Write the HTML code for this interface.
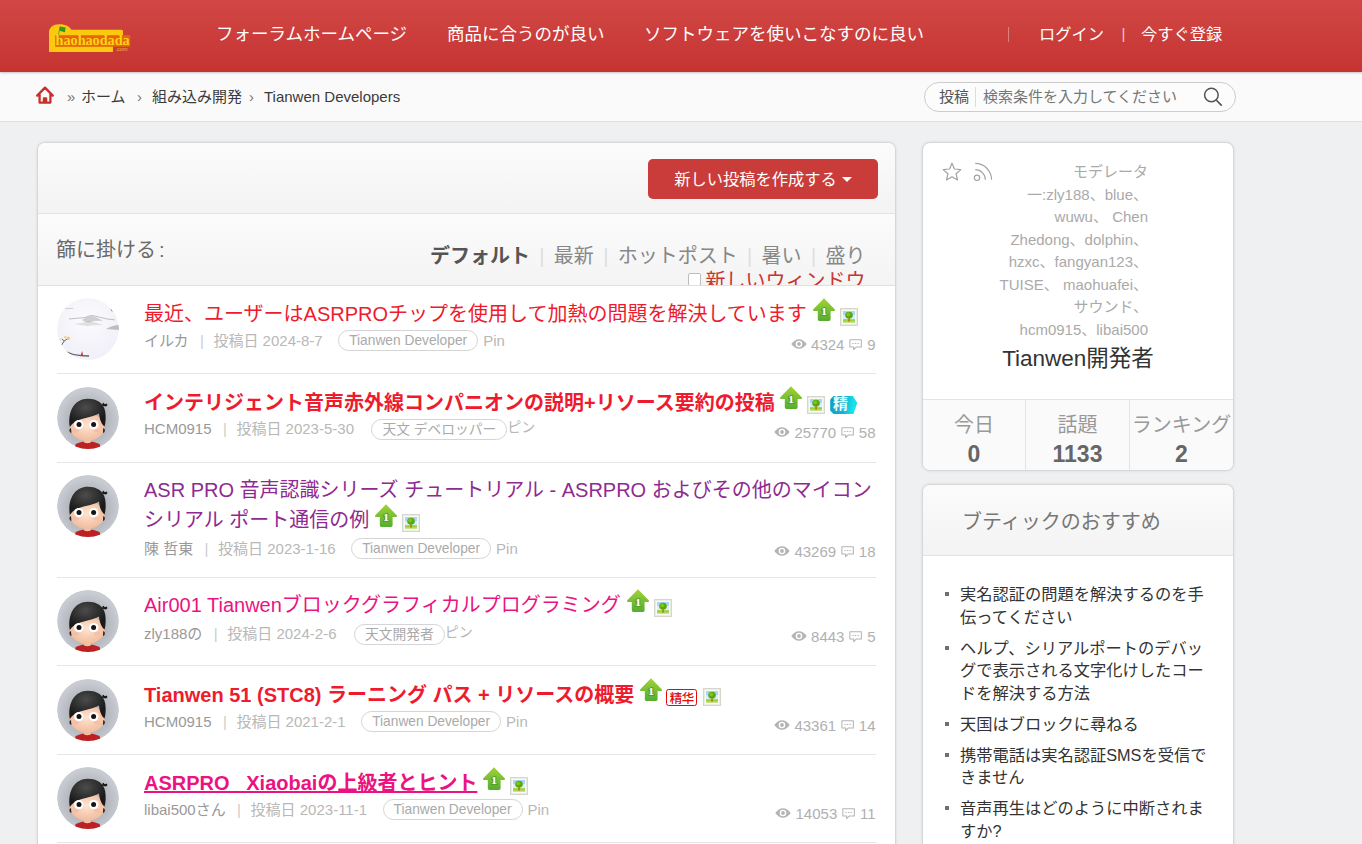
<!DOCTYPE html>
<html lang="ja">
<head>
<meta charset="utf-8">
<title>Tianwen Developers</title>
<style>
*{box-sizing:border-box;margin:0;padding:0}
html,body{width:1362px;height:844px;overflow:hidden}
body{background:#eff0f2;font-family:"Liberation Sans","Noto Sans CJK JP",sans-serif;color:#333;position:relative}
a{color:inherit;text-decoration:none}
.abs{position:absolute;white-space:nowrap}
#hd{position:absolute;left:0;top:0;width:1362px;height:72px;background:linear-gradient(#d14745,#c53431);box-shadow:0 1px 2px rgba(0,0,0,.22);z-index:2}
#hd .nav{position:absolute;top:0;height:68px;line-height:68px;font-size:17.5px;color:#fff;white-space:nowrap}
#hd .bar{position:absolute;top:27px;width:1px;height:15px;background:rgba(255,255,255,.35)}
#crumb{position:absolute;left:0;top:72px;width:1362px;height:50px;background:#fafafa;border-bottom:1px solid #dddee0}
#crumb .t{position:absolute;top:0;height:49px;line-height:49px;font-size:15px;color:#3a3a3a;white-space:nowrap}
#crumb .s{color:#777}
#search{position:absolute;left:924px;top:10px;width:312px;height:30px;border:1px solid #ccc;border-radius:15px;background:#fcfcfc}
#search .k{position:absolute;left:14px;top:0;line-height:28px;font-size:15px;color:#555}
#search .v{position:absolute;left:50px;top:4px;width:1px;height:20px;background:#ddd}
#search .p{position:absolute;left:58px;top:0;line-height:28px;font-size:15px;color:#757575}
#main{position:absolute;left:37px;top:142px;width:859px;height:720px;background:#fff;border:1px solid #d6d7d9;border-radius:8px;overflow:hidden;box-shadow:0 0 3px rgba(0,0,0,.1)}
#tb1{position:absolute;left:0;top:0;width:100%;height:71px;background:linear-gradient(#fbfbfb,#f3f3f3);border-bottom:1px solid #e3e3e3}
#tb2{position:absolute;left:0;top:71px;width:100%;height:72px;background:linear-gradient(#fbfbfb,#f4f4f4);border-bottom:1px solid #e0e0e0;overflow:hidden}
#newbtn{position:absolute;left:610px;top:16px;width:230px;height:40px;background:#c93c39;border-radius:5px;color:#fff;font-size:16.25px;line-height:40px;text-align:center;white-space:nowrap}
#newbtn i{display:inline-block;width:0;height:0;border:5px solid transparent;border-top:5px solid #fff;border-bottom:0;vertical-align:middle;margin-left:5px;position:relative;top:-1px}
.ftabs{left:300px;top:30px;width:538px;height:60px;white-space:normal;text-align:right;font-size:20px;line-height:25px;color:#888;padding-right:10.5px}
.ftabs i{font-style:normal;color:#ddd;margin:0 9.35px;font-size:20px}
.cb{display:inline-block;width:12.5px;height:12.5px;border:1px solid #bdbdbd;border-radius:2px;background:#fff;margin-right:5px;vertical-align:2.5px}
.row{position:absolute;left:0;top:0;width:857px}
.row .sep{position:absolute;left:19px;width:819px;height:1px;background:#e6e6e6}
.av{position:absolute;left:19px;width:62px;height:62px;border-radius:50%;overflow:hidden}
.av svg{display:block}
.tt{position:absolute;left:106px;font-size:20px;line-height:30px;width:745px}
.tt b{font-weight:700}
.meta{position:absolute;left:106px;font-size:15px;line-height:22px;color:#b8b8b8;white-space:nowrap}
.meta .u{color:#999}
.meta .bar{color:#ccc;margin:0 9.6px 0 11.4px}
.pill{display:inline-block;border:1px solid #d5d5d5;border-radius:11px;height:21px;line-height:19px;font-size:13.75px;padding:0 10px;color:#aaa;margin-left:15.5px;vertical-align:1px}
.pin{color:#b8b8b8;margin-left:5px}
.pinj{color:#b8b8b8;margin-left:0;font-size:14px;position:relative;top:-2px;line-height:1}
.st{position:absolute;right:19.5px;margin-top:-.5px;font-size:15px;line-height:20px;height:20px;color:#b0b0b0;white-space:nowrap;display:flex;align-items:center}
.st svg{display:block}
.ic{display:inline-block;vertical-align:baseline}
.card{position:absolute;left:922px;width:312px;background:#fff;border:1px solid #d6d7d9;border-radius:8px;overflow:hidden;box-shadow:0 0 3px rgba(0,0,0,.1)}
.stat{top:266px;text-align:center;font-size:20px;line-height:30px;color:#999;white-space:nowrap}
.stat b{display:block;font-size:23px;line-height:28px;color:#666}
.rec{position:absolute;left:22px;top:98px;width:266px;list-style:none;font-size:16.25px;line-height:22.5px;color:#333}
.rec li{position:relative;padding-left:15px;margin-bottom:8.5px;word-break:break-all}
.rec li:before{content:"";position:absolute;left:0;top:9px;width:4px;height:4px;background:#707070}
</style>
</head>
<body>
<div id="hd">
<svg class="abs" style="left:46px;top:20px" width="90" height="36" viewBox="0 0 90 36">
<path d="M3 32V12.5C3 7.5 7 4.2 13.5 4.2C20 4.2 23.5 6.6 25.5 9.8H75.5Q77 9.8 77 11.3V20H67V32Z" fill="#fdc90f"/>
<rect x="9.2" y="15.2" width="75" height="11.6" fill="#e8670c"/>
<path d="M12.2 16.5L14 6.6" stroke="#6aa21a" stroke-width="0.9" fill="none"/>
<path d="M14 6.4L19.6 7.6L19 12.2L13.3 10.8Z" fill="#2f9a1e"/>
<text x="9.6" y="25.3" font-family="'Liberation Serif',serif" font-weight="700" font-size="14.2" fill="#fdd314" textLength="74" lengthAdjust="spacingAndGlyphs">haohaodada</text>
<text x="69.5" y="30.6" font-family="'Liberation Sans',sans-serif" font-size="4.6" fill="#f6b93a" textLength="12" lengthAdjust="spacingAndGlyphs">.com</text>
</svg>
<a class="nav" style="left:216px">フォーラムホームページ</a>
<a class="nav" style="left:447px">商品に合うのが良い</a>
<a class="nav" style="left:644px">ソフトウェアを使いこなすのに良い</a>
<span class="bar" style="left:1008px"></span>
<a class="nav" style="left:1039px;font-size:16.25px">ログイン</a>
<span class="nav" style="left:1121.5px;font-size:15px;color:rgba(255,255,255,.75)">|</span>
<a class="nav" style="left:1141px;font-size:16.25px">今すぐ登録</a>
</div>
<div id="crumb">
<svg class="abs" style="left:35px;top:13px" width="20" height="20" viewBox="0 0 20 20"><path d="M2.2 10.6L10 2.6L17.8 10.6M4.6 9.4V17.6H15.4V9.4M8.9 17.6V13.4H11.1V17.6" fill="none" stroke="#c5302d" stroke-width="2.3" stroke-linejoin="round" stroke-linecap="round"/></svg>
<span class="t s" style="left:67px">»</span>
<a class="t" style="left:81px">ホーム</a>
<span class="t s" style="left:137px">›</span>
<a class="t" style="left:152px">組み込み開発</a>
<span class="t s" style="left:249px">›</span>
<a class="t" style="left:264px">Tianwen Developers</a>
<div id="search"><span class="k">投稿</span><span class="v"></span><span class="p">検索条件を入力してください</span>
<svg class="abs" style="left:275.5px;top:2px" width="24" height="24" viewBox="0 0 24 24"><circle cx="10.4" cy="10" r="6.8" fill="none" stroke="#555" stroke-width="1.5"/><path d="M15.2 15L20.2 20.2" stroke="#555" stroke-width="1.7" stroke-linecap="round"/></svg>
</div>
</div>
<div id="main">
<div id="tb1"><a id="newbtn">新しい投稿を作成する<i></i></a></div>
<div id="tb2">
<span class="abs" style="left:18px;top:23px;font-size:20px;line-height:26px;color:#6a6a6a">篩に掛ける<span style="margin-left:3px">:</span></span>
<div class="abs ftabs"><b style="color:#555">デフォルト</b><i>|</i>最新<i>|</i>ホットポスト<i>|</i>暑い<i>|</i>盛り<br><span class="cb"></span><span style="color:#c9342f">新しいウィンドウ</span></div>
</div>
<div class="row">
<div class="av" style="top:155px"><svg width="62" height="62" viewBox="0 0 62 62"><defs><filter id="bl" x="-20%" y="-50%" width="140%" height="200%"><feGaussianBlur stdDeviation=".7"/></filter><radialGradient id="gsky" cx="50%" cy="35%" r="65%"><stop offset="0" stop-color="#fbfbfd"/><stop offset="1" stop-color="#f1eff8"/></radialGradient></defs><circle cx="31" cy="31" r="31" fill="url(#gsky)"/>
<g filter="url(#bl)"><path d="M12 21Q22 20 28 19.6Q33 17 36 17.6Q42 19 50 21Q56 21.4 58 22" fill="none" stroke="#8f8f8f" stroke-width="1" opacity=".55"/>
<path d="M25 22Q31 18 35 18Q40 19 46 23Q38 22.4 34 24Q29 25.4 25 22Z" fill="#8a8a8a" opacity=".38"/>
<path d="M17 26Q26 25 31 23Q38 24 46 27Q38 26.6 30 28Z" fill="#9a9a9a" opacity=".28"/>
<path d="M49 31Q56 27 62 27V32Q55 31.4 49 31Z" fill="#7c7c7c" opacity=".45"/>
<path d="M8 10.5H16" stroke="#aaa" stroke-width=".8" opacity=".6"/></g>
<path d="M4.6 47L7.2 43L5 40.8M7.2 43L11.6 40" stroke="#555" stroke-width=".9" fill="none"/>
<circle cx="11.2" cy="40.3" r="1.7" fill="#f1c77d"/><circle cx="8.2" cy="39" r="1.2" fill="#f3d39a"/><circle cx="3.4" cy="41.5" r="1" fill="#f3d39a"/>
<path d="M9.5 54Q16 57.2 24 57.6L32 58" stroke="#3c3c3c" stroke-width="1.3" fill="none" opacity=".8"/>
<path d="M23.6 57.4L25.2 53L26 57.6Z" fill="#d42a2a"/>
<path d="M54 11.5L55.2 13.4" stroke="#e05a4a" stroke-width="1"/>
</svg></div>
<div class="tt" style="top:156px"><a style="color:#ee1b2e">最近、ユーザーはASRPROチップを使用して加熱の問題を解決しています</a><svg class="ic" width="22" height="23" viewBox="0 0 22 23" style="margin-left:6px;margin-top:-4px;vertical-align:0"><defs><linearGradient id="gup" x1="0" y1="0" x2="0" y2="1"><stop offset="0" stop-color="#a2d236"/><stop offset="1" stop-color="#55ad31"/></linearGradient></defs><path d="M11 .2L21.9 11.6Q22.4 12.9 21 12.9H17.6V21.2Q17.6 22.9 16 22.9H6.4Q4.8 22.9 4.8 21.2V12.9H1Q-.4 12.9 .1 11.6Z" fill="url(#gup)"/><text x="11.1" y="17.3" font-family="'Liberation Serif',serif" font-weight="700" font-size="10.5" fill="#fff" stroke="#4c9a22" stroke-width="1.5" paint-order="stroke" text-anchor="middle" transform="translate(-2.8,0) scale(1.25,1)">1</text></svg><svg class="ic" width="18" height="18" viewBox="0 0 18 18" style="margin-left:5px;vertical-align:-5px"><rect x=".5" y=".5" width="17" height="17" fill="#fff" stroke="#d6d6ce"/><rect x="1.5" y="1.5" width="15" height="15" fill="#fafaf6" stroke="#ecece6"/><rect x="3" y="3" width="12" height="8.4" fill="#a9d6f7"/><rect x="3" y="7" width="12" height="4.4" fill="#d9eefb"/><rect x="3" y="11.2" width="12" height="3.8" fill="#9bd23c"/><rect x="3" y="13.6" width="12" height="1.4" fill="#c6e58a"/><rect x="8.2" y="9" width="1.7" height="4.6" fill="#d5720f"/><ellipse cx="9" cy="7.2" rx="3.8" ry="3.4" fill="#58aa0c"/><ellipse cx="8.2" cy="6.4" rx="2" ry="1.8" fill="#80c41a"/></svg></div>
<div class="meta" style="top:187px"><span class="u">イルカ</span><span class="bar">|</span>投稿日 2024-8-7<span class="pill">Tianwen Developer</span><span class="pin">Pin</span></div>
<div class="st" style="top:192.5px"><svg width="16" height="10" viewBox="0 0 16 10" style="margin-right:4.2px;margin-top:-1.5px"><path d="M.3 5Q3.6 .2 8 .2Q12.4 .2 15.7 5Q12.4 9.8 8 9.8Q3.6 9.8 .3 5Z" fill="#b4b4b4"/><circle cx="8" cy="5" r="3.3" fill="#fff"/><circle cx="8" cy="5" r="1.9" fill="#b4b4b4"/></svg><span>4324</span><svg width="13.2" height="11.3" viewBox="0 0 14 12" style="margin:-.3px 4.5px 0 5px"><path d="M.9 .7H13.1V8.6H7.6L5 11.3V8.6H.9Z" fill="none" stroke="#b4b4b4" stroke-width="1.1" stroke-linejoin="round"/><path d="M3.6 4.7H5M6.3 4.7H7.7M9 4.7H10.4" stroke="#b4b4b4" stroke-width="1.1"/></svg><span>9</span></div>
<div class="sep" style="top:230px"></div>
</div>
<div class="row">
<div class="av" style="top:244px"><svg width="62" height="62" viewBox="0 0 62 62"><defs><radialGradient id="gbg" cx="50%" cy="55%" r="50%"><stop offset="0.5" stop-color="#aeb2b8"/><stop offset="1" stop-color="#c8cbd1"/></radialGradient><radialGradient id="ghair" cx="45%" cy="30%" r="60%"><stop offset="0" stop-color="#4c4c4c"/><stop offset="1" stop-color="#1a1a1a"/></radialGradient><radialGradient id="gface" cx="50%" cy="45%" r="60%"><stop offset="0" stop-color="#ffe4d0"/><stop offset="1" stop-color="#f0b898"/></radialGradient></defs><g>
<circle cx="31" cy="31" r="31" fill="url(#gbg)"/>
<path d="M18.6 57Q24 54.2 30.5 54.2Q37 54.2 42.6 57L44 63H17.5Z" fill="#bd2023"/>
<rect x="27.2" y="49" width="6.6" height="5.6" rx="2.4" fill="#f3bfa2"/>
<ellipse cx="30.2" cy="40" rx="17.4" ry="13.8" fill="url(#gface)"/>
<ellipse cx="19" cy="43.4" rx="3" ry="1.8" fill="#f7a9a0" opacity=".4"/><ellipse cx="39.6" cy="43.4" rx="3" ry="1.8" fill="#f7a9a0" opacity=".4"/>
<path d="M12.8 40C10.3 24 18 11.8 30.6 11.8C40.5 11.8 46.8 16.5 48.2 24.5C49 30 48.8 35 47.6 39.4C45.2 38 42.4 33 42 26.5C34 31.5 21 30.5 14.8 37.6Z" fill="url(#ghair)"/>
<path d="M12.6 42Q12 45.5 14.4 46L14 41Z" fill="#222"/><path d="M47.6 42Q48.4 45.5 46 46L46.2 41Z" fill="#222"/>
<path d="M45 18.5Q45.5 14.5 47.2 16.4Q47 17.8 49.6 16.4Q51.6 18.6 48.4 19.6Z" fill="#1c1c1c"/>
<ellipse cx="30.4" cy="54.6" rx="3.7" ry="1.7" fill="#f3bfa2"/>
<circle cx="21.8" cy="37.6" r="4.7" fill="#fff"/><circle cx="36.8" cy="37.6" r="4.7" fill="#fff"/>
<circle cx="22" cy="37.6" r="2.5" fill="#151515"/><circle cx="36.6" cy="37.6" r="2.5" fill="#151515"/>
</g></svg></div>
<div class="tt" style="top:245px"><a style="color:#ee1b2e"><b>インテリジェント音声赤外線コンパニオンの説明+リソース要約の投稿</b></a><span style="position:relative;top:-1px;left:-.5px"><svg class="ic" width="22" height="23" viewBox="0 0 22 23" style="margin-left:6px;margin-top:-4px;vertical-align:0"><path d="M11 .2L21.9 11.6Q22.4 12.9 21 12.9H17.6V21.2Q17.6 22.9 16 22.9H6.4Q4.8 22.9 4.8 21.2V12.9H1Q-.4 12.9 .1 11.6Z" fill="url(#gup)"/><text x="11.1" y="17.3" font-family="'Liberation Serif',serif" font-weight="700" font-size="10.5" fill="#fff" stroke="#4c9a22" stroke-width="1.5" paint-order="stroke" text-anchor="middle" transform="translate(-2.8,0) scale(1.25,1)">1</text></svg><svg class="ic" width="18" height="18" viewBox="0 0 18 18" style="margin-left:5px;vertical-align:-5px"><rect x=".5" y=".5" width="17" height="17" fill="#fff" stroke="#d6d6ce"/><rect x="1.5" y="1.5" width="15" height="15" fill="#fafaf6" stroke="#ecece6"/><rect x="3" y="3" width="12" height="8.4" fill="#a9d6f7"/><rect x="3" y="7" width="12" height="4.4" fill="#d9eefb"/><rect x="3" y="11.2" width="12" height="3.8" fill="#9bd23c"/><rect x="3" y="13.6" width="12" height="1.4" fill="#c6e58a"/><rect x="8.2" y="9" width="1.7" height="4.6" fill="#d5720f"/><ellipse cx="9" cy="7.2" rx="3.8" ry="3.4" fill="#58aa0c"/><ellipse cx="8.2" cy="6.4" rx="2" ry="1.8" fill="#80c41a"/></svg><span class="ic" style="position:relative;width:27px;height:18px;margin-left:5px;vertical-align:-5px;background:linear-gradient(100deg,#0b9fc4 0%,#12b6d4 55%,#19e6ee 85%,#10c4dc 100%);clip-path:polygon(12% 0,84% 0,100% 38%,86% 100%,12% 100%,0 80%,0 20%);border-radius:4px"><span style="position:absolute;left:2.8px;top:-5px;font:700 15px/24px 'Noto Sans CJK JP','Noto Sans CJK SC',sans-serif;color:#e9fdff">精</span></span></span></div>
<div class="meta" style="top:275px"><span class="u">HCM0915</span><span class="bar">|</span>投稿日 2023-5-30<span class="pill" style="margin-left:17.5px;position:relative;top:1px">天文 デベロッパー</span><span class="pinj">ピン</span></div>
<div class="st" style="top:280.5px"><svg width="16" height="10" viewBox="0 0 16 10" style="margin-right:4.2px;margin-top:-1.5px"><path d="M.3 5Q3.6 .2 8 .2Q12.4 .2 15.7 5Q12.4 9.8 8 9.8Q3.6 9.8 .3 5Z" fill="#b4b4b4"/><circle cx="8" cy="5" r="3.3" fill="#fff"/><circle cx="8" cy="5" r="1.9" fill="#b4b4b4"/></svg><span>25770</span><svg width="13.2" height="11.3" viewBox="0 0 14 12" style="margin:-.3px 4.5px 0 5px"><path d="M.9 .7H13.1V8.6H7.6L5 11.3V8.6H.9Z" fill="none" stroke="#b4b4b4" stroke-width="1.1" stroke-linejoin="round"/><path d="M3.6 4.7H5M6.3 4.7H7.7M9 4.7H10.4" stroke="#b4b4b4" stroke-width="1.1"/></svg><span>58</span></div>
<div class="sep" style="top:319px"></div>
</div>
<div class="row">
<div class="av" style="top:332px"><svg width="62" height="62" viewBox="0 0 62 62">
<circle cx="31" cy="31" r="31" fill="url(#gbg)"/>
<path d="M18.6 57Q24 54.2 30.5 54.2Q37 54.2 42.6 57L44 63H17.5Z" fill="#bd2023"/>
<rect x="27.2" y="49" width="6.6" height="5.6" rx="2.4" fill="#f3bfa2"/>
<ellipse cx="30.2" cy="40" rx="17.4" ry="13.8" fill="url(#gface)"/>
<ellipse cx="19" cy="43.4" rx="3" ry="1.8" fill="#f7a9a0" opacity=".4"/><ellipse cx="39.6" cy="43.4" rx="3" ry="1.8" fill="#f7a9a0" opacity=".4"/>
<path d="M12.8 40C10.3 24 18 11.8 30.6 11.8C40.5 11.8 46.8 16.5 48.2 24.5C49 30 48.8 35 47.6 39.4C45.2 38 42.4 33 42 26.5C34 31.5 21 30.5 14.8 37.6Z" fill="url(#ghair)"/>
<path d="M12.6 42Q12 45.5 14.4 46L14 41Z" fill="#222"/><path d="M47.6 42Q48.4 45.5 46 46L46.2 41Z" fill="#222"/>
<path d="M45 18.5Q45.5 14.5 47.2 16.4Q47 17.8 49.6 16.4Q51.6 18.6 48.4 19.6Z" fill="#1c1c1c"/>
<ellipse cx="30.4" cy="54.6" rx="3.7" ry="1.7" fill="#f3bfa2"/>
<circle cx="21.8" cy="37.6" r="4.7" fill="#fff"/><circle cx="36.8" cy="37.6" r="4.7" fill="#fff"/>
<circle cx="22" cy="37.6" r="2.5" fill="#151515"/><circle cx="36.6" cy="37.6" r="2.5" fill="#151515"/>
</svg></div>
<div class="tt" style="top:332px"><a style="color:#8f2a90">ASR PRO 音声認識シリーズ チュートリアル - ASRPRO およびその他のマイコン シリアル ポート通信の例</a><svg class="ic" width="22" height="23" viewBox="0 0 22 23" style="margin-left:6px;margin-top:-4px;vertical-align:0"><path d="M11 .2L21.9 11.6Q22.4 12.9 21 12.9H17.6V21.2Q17.6 22.9 16 22.9H6.4Q4.8 22.9 4.8 21.2V12.9H1Q-.4 12.9 .1 11.6Z" fill="url(#gup)"/><text x="11.1" y="17.3" font-family="'Liberation Serif',serif" font-weight="700" font-size="10.5" fill="#fff" stroke="#4c9a22" stroke-width="1.5" paint-order="stroke" text-anchor="middle" transform="translate(-2.8,0) scale(1.25,1)">1</text></svg><svg class="ic" width="18" height="18" viewBox="0 0 18 18" style="margin-left:5px;vertical-align:-5px"><rect x=".5" y=".5" width="17" height="17" fill="#fff" stroke="#d6d6ce"/><rect x="1.5" y="1.5" width="15" height="15" fill="#fafaf6" stroke="#ecece6"/><rect x="3" y="3" width="12" height="8.4" fill="#a9d6f7"/><rect x="3" y="7" width="12" height="4.4" fill="#d9eefb"/><rect x="3" y="11.2" width="12" height="3.8" fill="#9bd23c"/><rect x="3" y="13.6" width="12" height="1.4" fill="#c6e58a"/><rect x="8.2" y="9" width="1.7" height="4.6" fill="#d5720f"/><ellipse cx="9" cy="7.2" rx="3.8" ry="3.4" fill="#58aa0c"/><ellipse cx="8.2" cy="6.4" rx="2" ry="1.8" fill="#80c41a"/></svg></div>
<div class="meta" style="top:395px"><span class="u">陳 哲東</span><span class="bar">|</span>投稿日 2023-1-16<span class="pill">Tianwen Developer</span><span class="pin">Pin</span></div>
<div class="st" style="top:399.5px"><svg width="16" height="10" viewBox="0 0 16 10" style="margin-right:4.2px;margin-top:-1.5px"><path d="M.3 5Q3.6 .2 8 .2Q12.4 .2 15.7 5Q12.4 9.8 8 9.8Q3.6 9.8 .3 5Z" fill="#b4b4b4"/><circle cx="8" cy="5" r="3.3" fill="#fff"/><circle cx="8" cy="5" r="1.9" fill="#b4b4b4"/></svg><span>43269</span><svg width="13.2" height="11.3" viewBox="0 0 14 12" style="margin:-.3px 4.5px 0 5px"><path d="M.9 .7H13.1V8.6H7.6L5 11.3V8.6H.9Z" fill="none" stroke="#b4b4b4" stroke-width="1.1" stroke-linejoin="round"/><path d="M3.6 4.7H5M6.3 4.7H7.7M9 4.7H10.4" stroke="#b4b4b4" stroke-width="1.1"/></svg><span>18</span></div>
<div class="sep" style="top:434px"></div>
</div>
<div class="row">
<div class="av" style="top:447px"><svg width="62" height="62" viewBox="0 0 62 62">
<circle cx="31" cy="31" r="31" fill="url(#gbg)"/>
<path d="M18.6 57Q24 54.2 30.5 54.2Q37 54.2 42.6 57L44 63H17.5Z" fill="#bd2023"/>
<rect x="27.2" y="49" width="6.6" height="5.6" rx="2.4" fill="#f3bfa2"/>
<ellipse cx="30.2" cy="40" rx="17.4" ry="13.8" fill="url(#gface)"/>
<ellipse cx="19" cy="43.4" rx="3" ry="1.8" fill="#f7a9a0" opacity=".4"/><ellipse cx="39.6" cy="43.4" rx="3" ry="1.8" fill="#f7a9a0" opacity=".4"/>
<path d="M12.8 40C10.3 24 18 11.8 30.6 11.8C40.5 11.8 46.8 16.5 48.2 24.5C49 30 48.8 35 47.6 39.4C45.2 38 42.4 33 42 26.5C34 31.5 21 30.5 14.8 37.6Z" fill="url(#ghair)"/>
<path d="M12.6 42Q12 45.5 14.4 46L14 41Z" fill="#222"/><path d="M47.6 42Q48.4 45.5 46 46L46.2 41Z" fill="#222"/>
<path d="M45 18.5Q45.5 14.5 47.2 16.4Q47 17.8 49.6 16.4Q51.6 18.6 48.4 19.6Z" fill="#1c1c1c"/>
<ellipse cx="30.4" cy="54.6" rx="3.7" ry="1.7" fill="#f3bfa2"/>
<circle cx="21.8" cy="37.6" r="4.7" fill="#fff"/><circle cx="36.8" cy="37.6" r="4.7" fill="#fff"/>
<circle cx="22" cy="37.6" r="2.5" fill="#151515"/><circle cx="36.6" cy="37.6" r="2.5" fill="#151515"/>
</svg></div>
<div class="tt" style="top:447px"><a style="color:#ec1282">Air001 Tianwenブロックグラフィカルプログラミング</a><svg class="ic" width="22" height="23" viewBox="0 0 22 23" style="margin-left:6px;margin-top:-4px;vertical-align:0"><path d="M11 .2L21.9 11.6Q22.4 12.9 21 12.9H17.6V21.2Q17.6 22.9 16 22.9H6.4Q4.8 22.9 4.8 21.2V12.9H1Q-.4 12.9 .1 11.6Z" fill="url(#gup)"/><text x="11.1" y="17.3" font-family="'Liberation Serif',serif" font-weight="700" font-size="10.5" fill="#fff" stroke="#4c9a22" stroke-width="1.5" paint-order="stroke" text-anchor="middle" transform="translate(-2.8,0) scale(1.25,1)">1</text></svg><svg class="ic" width="18" height="18" viewBox="0 0 18 18" style="margin-left:5px;vertical-align:-5px"><rect x=".5" y=".5" width="17" height="17" fill="#fff" stroke="#d6d6ce"/><rect x="1.5" y="1.5" width="15" height="15" fill="#fafaf6" stroke="#ecece6"/><rect x="3" y="3" width="12" height="8.4" fill="#a9d6f7"/><rect x="3" y="7" width="12" height="4.4" fill="#d9eefb"/><rect x="3" y="11.2" width="12" height="3.8" fill="#9bd23c"/><rect x="3" y="13.6" width="12" height="1.4" fill="#c6e58a"/><rect x="8.2" y="9" width="1.7" height="4.6" fill="#d5720f"/><ellipse cx="9" cy="7.2" rx="3.8" ry="3.4" fill="#58aa0c"/><ellipse cx="8.2" cy="6.4" rx="2" ry="1.8" fill="#80c41a"/></svg></div>
<div class="meta" style="top:479.5px"><span class="u">zly188の</span><span class="bar">|</span>投稿日 2024-2-6<span class="pill" style="margin-left:17.5px;position:relative;top:1px">天文開発者</span><span class="pinj">ピン</span></div>
<div class="st" style="top:484.5px"><svg width="16" height="10" viewBox="0 0 16 10" style="margin-right:4.2px;margin-top:-1.5px"><path d="M.3 5Q3.6 .2 8 .2Q12.4 .2 15.7 5Q12.4 9.8 8 9.8Q3.6 9.8 .3 5Z" fill="#b4b4b4"/><circle cx="8" cy="5" r="3.3" fill="#fff"/><circle cx="8" cy="5" r="1.9" fill="#b4b4b4"/></svg><span>8443</span><svg width="13.2" height="11.3" viewBox="0 0 14 12" style="margin:-.3px 4.5px 0 5px"><path d="M.9 .7H13.1V8.6H7.6L5 11.3V8.6H.9Z" fill="none" stroke="#b4b4b4" stroke-width="1.1" stroke-linejoin="round"/><path d="M3.6 4.7H5M6.3 4.7H7.7M9 4.7H10.4" stroke="#b4b4b4" stroke-width="1.1"/></svg><span>5</span></div>
<div class="sep" style="top:522px"></div>
</div>
<div class="row">
<div class="av" style="top:536px"><svg width="62" height="62" viewBox="0 0 62 62">
<circle cx="31" cy="31" r="31" fill="url(#gbg)"/>
<path d="M18.6 57Q24 54.2 30.5 54.2Q37 54.2 42.6 57L44 63H17.5Z" fill="#bd2023"/>
<rect x="27.2" y="49" width="6.6" height="5.6" rx="2.4" fill="#f3bfa2"/>
<ellipse cx="30.2" cy="40" rx="17.4" ry="13.8" fill="url(#gface)"/>
<ellipse cx="19" cy="43.4" rx="3" ry="1.8" fill="#f7a9a0" opacity=".4"/><ellipse cx="39.6" cy="43.4" rx="3" ry="1.8" fill="#f7a9a0" opacity=".4"/>
<path d="M12.8 40C10.3 24 18 11.8 30.6 11.8C40.5 11.8 46.8 16.5 48.2 24.5C49 30 48.8 35 47.6 39.4C45.2 38 42.4 33 42 26.5C34 31.5 21 30.5 14.8 37.6Z" fill="url(#ghair)"/>
<path d="M12.6 42Q12 45.5 14.4 46L14 41Z" fill="#222"/><path d="M47.6 42Q48.4 45.5 46 46L46.2 41Z" fill="#222"/>
<path d="M45 18.5Q45.5 14.5 47.2 16.4Q47 17.8 49.6 16.4Q51.6 18.6 48.4 19.6Z" fill="#1c1c1c"/>
<ellipse cx="30.4" cy="54.6" rx="3.7" ry="1.7" fill="#f3bfa2"/>
<circle cx="21.8" cy="37.6" r="4.7" fill="#fff"/><circle cx="36.8" cy="37.6" r="4.7" fill="#fff"/>
<circle cx="22" cy="37.6" r="2.5" fill="#151515"/><circle cx="36.6" cy="37.6" r="2.5" fill="#151515"/>
</svg></div>
<div class="tt" style="top:537px"><a style="color:#ee1b2e"><b>Tianwen 51 (STC8) ラーニング パス + リソースの概要</b></a><span style="position:relative;top:-1px"><svg class="ic" width="22" height="23" viewBox="0 0 22 23" style="margin-left:6px;margin-top:-4px;vertical-align:0"><path d="M11 .2L21.9 11.6Q22.4 12.9 21 12.9H17.6V21.2Q17.6 22.9 16 22.9H6.4Q4.8 22.9 4.8 21.2V12.9H1Q-.4 12.9 .1 11.6Z" fill="url(#gup)"/><text x="11.1" y="17.3" font-family="'Liberation Serif',serif" font-weight="700" font-size="10.5" fill="#fff" stroke="#4c9a22" stroke-width="1.5" paint-order="stroke" text-anchor="middle" transform="translate(-2.8,0) scale(1.25,1)">1</text></svg><span class="ic" style="width:31px;height:17px;margin-left:4px;margin-right:0;vertical-align:-4.5px;border:1.3px solid #e20a0a;border-radius:2.5px;background:#fff;overflow:hidden;text-align:center;font:500 12.5px/15px 'Noto Sans CJK SC','Noto Sans CJK JP',sans-serif;color:#e20a0a;letter-spacing:-.5px">精华</span><span style="margin-left:1px"></span><svg class="ic" width="18" height="18" viewBox="0 0 18 18" style="margin-left:5px;vertical-align:-5px"><rect x=".5" y=".5" width="17" height="17" fill="#fff" stroke="#d6d6ce"/><rect x="1.5" y="1.5" width="15" height="15" fill="#fafaf6" stroke="#ecece6"/><rect x="3" y="3" width="12" height="8.4" fill="#a9d6f7"/><rect x="3" y="7" width="12" height="4.4" fill="#d9eefb"/><rect x="3" y="11.2" width="12" height="3.8" fill="#9bd23c"/><rect x="3" y="13.6" width="12" height="1.4" fill="#c6e58a"/><rect x="8.2" y="9" width="1.7" height="4.6" fill="#d5720f"/><ellipse cx="9" cy="7.2" rx="3.8" ry="3.4" fill="#58aa0c"/><ellipse cx="8.2" cy="6.4" rx="2" ry="1.8" fill="#80c41a"/></svg></span></div>
<div class="meta" style="top:568px"><span class="u">HCM0915</span><span class="bar">|</span>投稿日 2021-2-1<span class="pill">Tianwen Developer</span><span class="pin">Pin</span></div>
<div class="st" style="top:573.5px"><svg width="16" height="10" viewBox="0 0 16 10" style="margin-right:4.2px;margin-top:-1.5px"><path d="M.3 5Q3.6 .2 8 .2Q12.4 .2 15.7 5Q12.4 9.8 8 9.8Q3.6 9.8 .3 5Z" fill="#b4b4b4"/><circle cx="8" cy="5" r="3.3" fill="#fff"/><circle cx="8" cy="5" r="1.9" fill="#b4b4b4"/></svg><span>43361</span><svg width="13.2" height="11.3" viewBox="0 0 14 12" style="margin:-.3px 4.5px 0 5px"><path d="M.9 .7H13.1V8.6H7.6L5 11.3V8.6H.9Z" fill="none" stroke="#b4b4b4" stroke-width="1.1" stroke-linejoin="round"/><path d="M3.6 4.7H5M6.3 4.7H7.7M9 4.7H10.4" stroke="#b4b4b4" stroke-width="1.1"/></svg><span>14</span></div>
<div class="sep" style="top:611px"></div>
</div>
<div class="row">
<div class="av" style="top:624px"><svg width="62" height="62" viewBox="0 0 62 62">
<circle cx="31" cy="31" r="31" fill="url(#gbg)"/>
<path d="M18.6 57Q24 54.2 30.5 54.2Q37 54.2 42.6 57L44 63H17.5Z" fill="#bd2023"/>
<rect x="27.2" y="49" width="6.6" height="5.6" rx="2.4" fill="#f3bfa2"/>
<ellipse cx="30.2" cy="40" rx="17.4" ry="13.8" fill="url(#gface)"/>
<ellipse cx="19" cy="43.4" rx="3" ry="1.8" fill="#f7a9a0" opacity=".4"/><ellipse cx="39.6" cy="43.4" rx="3" ry="1.8" fill="#f7a9a0" opacity=".4"/>
<path d="M12.8 40C10.3 24 18 11.8 30.6 11.8C40.5 11.8 46.8 16.5 48.2 24.5C49 30 48.8 35 47.6 39.4C45.2 38 42.4 33 42 26.5C34 31.5 21 30.5 14.8 37.6Z" fill="url(#ghair)"/>
<path d="M12.6 42Q12 45.5 14.4 46L14 41Z" fill="#222"/><path d="M47.6 42Q48.4 45.5 46 46L46.2 41Z" fill="#222"/>
<path d="M45 18.5Q45.5 14.5 47.2 16.4Q47 17.8 49.6 16.4Q51.6 18.6 48.4 19.6Z" fill="#1c1c1c"/>
<ellipse cx="30.4" cy="54.6" rx="3.7" ry="1.7" fill="#f3bfa2"/>
<circle cx="21.8" cy="37.6" r="4.7" fill="#fff"/><circle cx="36.8" cy="37.6" r="4.7" fill="#fff"/>
<circle cx="22" cy="37.6" r="2.5" fill="#151515"/><circle cx="36.6" cy="37.6" r="2.5" fill="#151515"/>
</svg></div>
<div class="tt" style="top:625px"><a style="color:#ec1282;text-decoration:underline"><b>ASRPRO_ Xiaobaiの上級者とヒント</b></a><svg class="ic" width="22" height="23" viewBox="0 0 22 23" style="margin-left:6px;margin-top:-4px;vertical-align:0"><path d="M11 .2L21.9 11.6Q22.4 12.9 21 12.9H17.6V21.2Q17.6 22.9 16 22.9H6.4Q4.8 22.9 4.8 21.2V12.9H1Q-.4 12.9 .1 11.6Z" fill="url(#gup)"/><text x="11.1" y="17.3" font-family="'Liberation Serif',serif" font-weight="700" font-size="10.5" fill="#fff" stroke="#4c9a22" stroke-width="1.5" paint-order="stroke" text-anchor="middle" transform="translate(-2.8,0) scale(1.25,1)">1</text></svg><svg class="ic" width="18" height="18" viewBox="0 0 18 18" style="margin-left:5px;vertical-align:-5px"><rect x=".5" y=".5" width="17" height="17" fill="#fff" stroke="#d6d6ce"/><rect x="1.5" y="1.5" width="15" height="15" fill="#fafaf6" stroke="#ecece6"/><rect x="3" y="3" width="12" height="8.4" fill="#a9d6f7"/><rect x="3" y="7" width="12" height="4.4" fill="#d9eefb"/><rect x="3" y="11.2" width="12" height="3.8" fill="#9bd23c"/><rect x="3" y="13.6" width="12" height="1.4" fill="#c6e58a"/><rect x="8.2" y="9" width="1.7" height="4.6" fill="#d5720f"/><ellipse cx="9" cy="7.2" rx="3.8" ry="3.4" fill="#58aa0c"/><ellipse cx="8.2" cy="6.4" rx="2" ry="1.8" fill="#80c41a"/></svg></div>
<div class="meta" style="top:656px"><span class="u">libai500さん</span><span class="bar">|</span>投稿日 2023-11-1<span class="pill">Tianwen Developer</span><span class="pin">Pin</span></div>
<div class="st" style="top:661.5px"><svg width="16" height="10" viewBox="0 0 16 10" style="margin-right:4.2px;margin-top:-1.5px"><path d="M.3 5Q3.6 .2 8 .2Q12.4 .2 15.7 5Q12.4 9.8 8 9.8Q3.6 9.8 .3 5Z" fill="#b4b4b4"/><circle cx="8" cy="5" r="3.3" fill="#fff"/><circle cx="8" cy="5" r="1.9" fill="#b4b4b4"/></svg><span>14053</span><svg width="13.2" height="11.3" viewBox="0 0 14 12" style="margin:-.3px 4.5px 0 5px"><path d="M.9 .7H13.1V8.6H7.6L5 11.3V8.6H.9Z" fill="none" stroke="#b4b4b4" stroke-width="1.1" stroke-linejoin="round"/><path d="M3.6 4.7H5M6.3 4.7H7.7M9 4.7H10.4" stroke="#b4b4b4" stroke-width="1.1"/></svg><span>11</span></div>
<div class="sep" style="top:699px"></div>
</div>
</div>
<div class="card" style="top:142px;height:329px">
<svg class="abs" style="left:17.5px;top:18px" width="22" height="22" viewBox="0 0 22 22"><path d="M11 2.2L13.5 8L19.8 8.6L15.1 12.8L16.5 19L11 15.8L5.5 19L6.9 12.8L2.2 8.6L8.5 8Z" fill="none" stroke="#a4a4a4" stroke-width="1.25" stroke-linejoin="round"/></svg>
<svg class="abs" style="left:47.5px;top:18px" width="24" height="22" viewBox="0 0 24 22"><circle cx="6" cy="16.8" r="2.7" fill="none" stroke="#a4a4a4" stroke-width="1.2"/><path d="M4.2 8.6A10.2 10.2 0 0 1 14.4 18.8" fill="none" stroke="#a4a4a4" stroke-width="1.2"/><path d="M4.2 2.4A16.4 16.4 0 0 1 20.6 18.8" fill="none" stroke="#a4a4a4" stroke-width="1.2"/></svg>
<div class="abs" style="left:60px;top:18px;width:165px;white-space:normal;text-align:right;font-size:15px;line-height:22.5px;color:#aaa">モデレータ<br>一:zly188、blue、<br>wuwu、 Chen<br>Zhedong、dolphin、<br>hzxc、fangyan123、<br>TUISE、 maohuafei、<br>サウンド、<br>hcm0915、libai500</div>
<div class="abs" style="left:0;top:198px;width:310px;text-align:center;font-size:22.5px;line-height:36px;color:#333">Tianwen開発者</div>
<div class="abs" style="left:0;top:256px;width:310px;height:72px;background:#fafafa;border-top:1px solid #e3e3e3"></div>
<div class="abs" style="left:102px;top:257px;width:1px;height:72px;background:#e3e3e3"></div>
<div class="abs" style="left:206px;top:257px;width:1px;height:72px;background:#e3e3e3"></div>
<div class="abs stat" style="left:0;width:102px;top:267px">今日<b>0</b></div>
<div class="abs stat" style="left:103px;width:103px;top:267px">話題<b>1133</b></div>
<div class="abs stat" style="left:207px;width:103px;top:267px">ランキング<b>2</b></div>
</div>
<div class="card" style="top:484px;height:400px">
<div class="abs" style="left:0;top:0;width:310px;height:71px;background:linear-gradient(#fbfbfb,#f3f3f3);border-bottom:1px solid #e3e3e3"></div>
<div class="abs" style="left:39px;top:21px;font-size:20px;line-height:32px;color:#777">ブティックのおすすめ</div>
<ul class="rec">
<li>実名認証の問題を解決するのを手伝ってください</li>
<li>ヘルプ、シリアルポートのデバッグで表示される文字化けしたコードを解決する方法</li>
<li>天国はブロックに尋ねる</li>
<li>携帯電話は実名認証SMSを受信できません</li>
<li>音声再生はどのように中断されますか?</li>
</ul>
</div>
</body>
</html>
